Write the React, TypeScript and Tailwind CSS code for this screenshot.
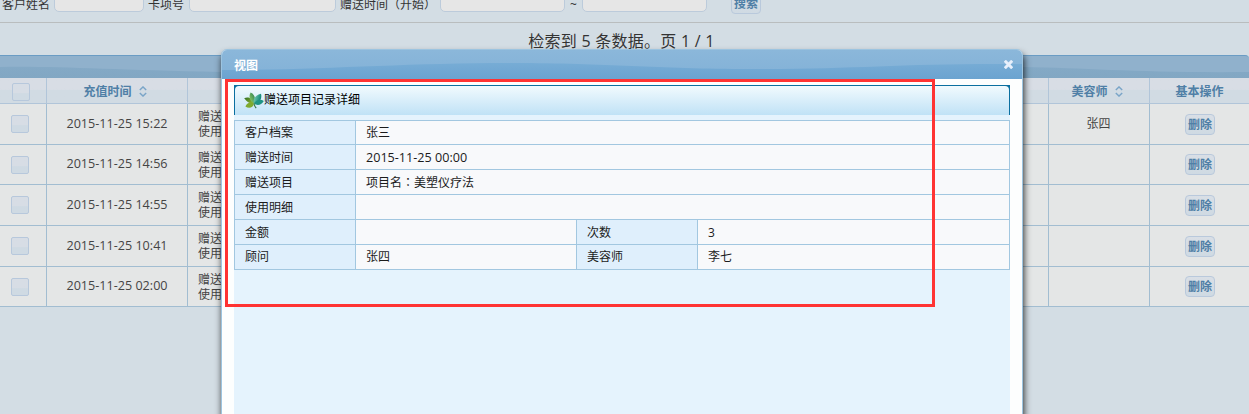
import React from 'react';

const records = [
  { time: '2015-11-25 15:22', beautician: '张四', height: 'h-[41px]' },
  { time: '2015-11-25 14:56', beautician: '', height: 'h-[40px]' },
  { time: '2015-11-25 14:55', beautician: '', height: 'h-[41px]' },
  { time: '2015-11-25 10:41', beautician: '', height: 'h-[41px]' },
  { time: '2015-11-25 02:00', beautician: '', height: 'h-[40px]' },
];

const GRID = 'grid grid-cols-[47px_141px_861px_101px_99px]';
const CELL = 'border-r border-[#a2bdd1]';

function SortIcon() {
  return (
    <svg width="8" height="11" viewBox="0 0 8 11" fill="none" stroke="#7aa5c8" strokeWidth="1.4" className="shrink-0">
      <path d="M0.8 4 L4 0.9 L7.2 4 M0.8 7 L4 10.1 L7.2 7" />
    </svg>
  );
}

function CheckBox() {
  return (
    <span className="block size-[18px] rounded-[2px] border border-[#b7c8dc] bg-linear-to-b from-[#d7dde5] from-55% to-[#cfdae3] to-60%" />
  );
}

function PlainButton({ children }: { children: React.ReactNode }) {
  return (
    <button className="h-[21px] w-[30px] shrink-0 rounded-[4px] border border-[#b9c9dc] bg-linear-to-b from-[#d9dfe6] to-[#cfdae3] text-[12px] leading-[19px] font-bold whitespace-nowrap text-[#4f7fa6]">
      {children}
    </button>
  );
}

function Centred({ children }: { children: React.ReactNode }) {
  return <span className="font-['Noto_Sans_CJK_TC',sans-serif] leading-none">{children}</span>;
}

function SearchForm() {
  const field = 'h-[21px] shrink-0 rounded-[5px] border border-[#bccbdb] bg-[#e6e6e6]';
  return (
    <div className="h-[23px] overflow-hidden border-b border-[#b9bdbe]">
      <div className="-mt-[9px] flex h-[28px] items-start pl-[2px] text-[12px] leading-[28px] whitespace-nowrap text-[#333]">
        <span className="w-[52px]">客户姓名</span>
        <span className={`${field} w-[90px]`} />
        <span className="ml-[4px] w-[41px]">卡项号</span>
        <span className={`${field} w-[147px]`} />
        <span className="ml-[4px] w-[100px]">
          赠送时间<Centred>（</Centred>开始<Centred>）</Centred>
        </span>
        <span className={`${field} w-[125px]`} />
        <span className="w-[17px] text-center">~</span>
        <span className={`${field} w-[125px]`} />
        <span className="ml-[24px] flex pt-[2px]">
          <PlainButton>搜索</PlainButton>
        </span>
      </div>
    </div>
  );
}

function RecordTable() {
  return (
    <div>
      <div className="h-[23px] overflow-hidden rounded-tr-[4px] border-t border-[#6a9cc4] bg-[#90b1cc]">
        <svg width="1249" height="22" viewBox="0 0 1249 22" className="block">
          <defs>
            <linearGradient id="band" x1="0" x2="0" y1="0" y2="1">
              <stop offset="0" stopColor="#84a9c6" />
              <stop offset="1" stopColor="#82a7c3" />
            </linearGradient>
          </defs>
          <path
            d="M0 11 C60 10 110 14 222 16 C400 18 600 10 800 10 C860 9 960 10 1023 11 C1090 12 1140 17 1249 16 V22 H0 Z"
            fill="url(#band)"
          />
        </svg>
      </div>
      <div
        className={`${GRID} h-[26px] border-b border-[#b1c5d9] bg-linear-to-b from-[#d8dde5] from-45% to-[#d1dbe3] to-50% text-[12px] font-bold text-[#4f7fa6]`}
      >
        <div className="flex items-center border-r border-[#b1c5d9] pt-[3px] pl-[12px]">
          <CheckBox />
        </div>
        <div className="flex items-center justify-center gap-[7px] border-r border-[#b1c5d9] pt-[2px] pr-[4px]">
          充值时间
          <SortIcon />
        </div>
        <div className="border-r border-[#b1c5d9]" />
        <div className="flex items-center justify-center gap-[7px] border-r border-[#b1c5d9] pt-[2px] pr-[4px]">
          美容师
          <SortIcon />
        </div>
        <div className="flex items-center justify-center pt-[2px]">基本操作</div>
      </div>
      {records.map((r) => (
        <div key={r.time} className={`${GRID} ${r.height} border-b border-[#a2bdd1] bg-[#e4e6e6] text-[12px] text-[#444]`}>
          <div className={`${CELL} flex items-center pl-[11px]`}>
            <CheckBox />
          </div>
          <div className={`${CELL} flex items-center justify-center text-[12.6px] whitespace-nowrap`}>{r.time}</div>
          <div className={`${CELL} flex flex-col justify-center overflow-hidden pl-[10px] leading-[15px] whitespace-nowrap`}>
            <span>赠送</span>
            <span>使用</span>
          </div>
          <div className={`${CELL} flex items-center justify-center pr-px`}>{r.beautician}</div>
          <div className="flex items-center justify-center pl-px">
            <PlainButton>删除</PlainButton>
          </div>
        </div>
      ))}
    </div>
  );
}

function LeafIcon() {
  return (
    <svg width="20" height="17" viewBox="0 0 20 17" className="shrink-0">
      <defs>
        <linearGradient id="leafLeft" x1="0" y1="0" x2="1" y2="1">
          <stop offset="0" stopColor="#2c6e20" />
          <stop offset="1" stopColor="#a3bd36" />
        </linearGradient>
        <linearGradient id="leafTop" x1="0" y1="1" x2="1" y2="0">
          <stop offset="0" stopColor="#9ad66a" />
          <stop offset="1" stopColor="#24784d" />
        </linearGradient>
        <linearGradient id="leafRight" x1="0" y1="0" x2="1" y2="0.3">
          <stop offset="0" stopColor="#7fd3b8" />
          <stop offset="1" stopColor="#108577" />
        </linearGradient>
      </defs>
      <path d="M10 11.5 C6.5 12.2 3 10.5 0.2 6.3 C4 4.2 8.8 6.2 10 11.5Z" fill="url(#leafLeft)" />
      <path d="M10 11.5 C5 8 4.6 4 6.6 0.4 C10.5 2 12.2 6.5 10 11.5Z" fill="url(#leafTop)" />
      <path d="M10 11.5 C8.5 6.5 12 2.8 17 1.8 C18.4 7 15 11.4 10 11.5Z" fill="url(#leafRight)" />
      <path d="M10 11.5 C12 7.6 16.5 6.6 19.8 9 C17.4 13 13.2 14.2 10 11.5Z" fill="#1f9484" />
      <path d="M10 11.5 C6.5 9.4 3 11 1.4 14.4 C4.8 16.8 9.2 15.8 10 11.5Z" fill="#7faa30" />
      <path d="M10 11.5 C10.2 13.5 11 14.8 12.2 16.2" stroke="#3b7a4a" strokeWidth="1.2" fill="none" />
    </svg>
  );
}

const LABEL = 'border-r border-b border-[#a2c7e0] bg-[#dfeffc] pl-[10px]';
const VALUE = 'border-r border-b border-[#a2c7e0] bg-[#f8f9fb] pl-[10px]';

const wideRows = [
  { label: '客户档案', value: '张三', height: 'h-[24px]', pad: 'pt-px' },
  { label: '赠送时间', value: '2015-11-25 00:00', height: 'h-[25px]', pad: 'pt-[2px]' },
  { label: '赠送项目', value: '项目名：美塑仪疗法', height: 'h-[25px]', pad: 'pt-[2px]' },
  { label: '使用明细', value: '', height: 'h-[25px]', pad: 'pt-[2px]' },
];

const splitRows = [
  { cells: ['金额', '', '次数', '3'], pad: 'pt-[2px]' },
  { cells: ['顾问', '张四', '美容师', '李七'], pad: 'pt-px' },
];

function DetailDialog() {
  return (
    <div className="absolute top-[49px] left-[221px] h-[380px] w-[802px] rounded-t-[6px] border border-[#9cc4e0] bg-[#fdfefe] shadow-[1px_5px_7px_0px_rgba(0,0,0,0.8)]">
      <div className="relative h-[29px] overflow-hidden rounded-t-[5px] bg-linear-to-b from-[#8bb7da] to-[#82b1d7]">
        <svg width="800" height="29" viewBox="0 0 800 29" className="absolute inset-0">
          <defs>
            <linearGradient id="titleWave" x1="0" x2="0" y1="0" y2="1">
              <stop offset="0" stopColor="#77acd5" />
              <stop offset="1" stopColor="#6ba3d0" />
            </linearGradient>
          </defs>
          <path d="M0 20 C100 20 180 13 290 13 C390 13 430 19 530 19 C640 19 680 13 800 14 V29 H0 Z" fill="url(#titleWave)" />
        </svg>
        <div className="relative flex h-full items-center justify-between pr-[9px] pl-[12px] text-[12px] font-bold text-white">
          <span className="pt-[2px]">视图</span>
          <svg width="9" height="9" viewBox="0 0 9 9" stroke="#e7effb" strokeWidth="3" strokeLinecap="butt">
            <path d="M0.8 0.8 L8.2 8.2 M8.2 0.8 L0.8 8.2" />
          </svg>
        </div>
      </div>
      <div className="mx-[12px] mt-[6px] h-[344px] bg-[#e5f3fd] text-[12px] text-[#1b1b1b]">
        <div className="h-[30px] bg-[#0b6fa0] px-px pt-px">
          <div className="flex h-[29px] items-center rounded-t-[4px] bg-linear-to-b from-[#f1fafe] to-[#c0e2f6] pl-[9px] text-black">
            <LeafIcon />
            <span className="-mt-px">赠送项目记录详细</span>
          </div>
        </div>
        <div className="mt-[5px] border-t border-l border-[#a2c7e0] leading-[22px]">
          {wideRows.map((row) => (
            <div key={row.label} className={`grid grid-cols-[121px_1fr] grid-rows-[100%] ${row.height}`}>
              <div className={`${LABEL} ${row.pad}`}>{row.label}</div>
              <div className={`${VALUE} ${row.pad}`}>
                {row.value.startsWith('2015') ? (
                  <div className="text-[12.6px]">{row.value}</div>
                ) : (
                  row.value.split('：').map((part, i) => (
                    <React.Fragment key={part}>
                      {i > 0 && <Centred>：</Centred>}
                      {part}
                    </React.Fragment>
                  ))
                )}
              </div>
            </div>
          ))}
          {splitRows.map(({ cells: [a, b, c, d], pad }) => (
            <div key={a} className="grid h-[25px] grid-cols-[121px_221px_121px_1fr] grid-rows-[100%]">
              <div className={`${LABEL} ${pad}`}>{a}</div>
              <div className={`${VALUE} ${pad}`}>{b}</div>
              <div className={`${LABEL} ${pad}`}>{c}</div>
              <div className={`${VALUE} ${pad}`}>{d}</div>
            </div>
          ))}
        </div>
      </div>
    </div>
  );
}

export default function App() {
  return (
    <div className="relative h-[414px] w-[1249px] overflow-hidden bg-[#d3dde4] font-['Open_Sans','Noto_Sans_CJK_SC',sans-serif]">
      <SearchForm />
      <div className="h-[32px] pr-[6px] text-center text-[16px] leading-[36px] tracking-[0.25px] text-[#333]">
        检索到 5 条数据。页 1 / 1
      </div>
      <RecordTable />
      <DetailDialog />
      <div className="pointer-events-none absolute top-[79px] left-[225px] h-[228px] w-[710px] border-3 border-[#ff3333]" />
    </div>
  );
}
